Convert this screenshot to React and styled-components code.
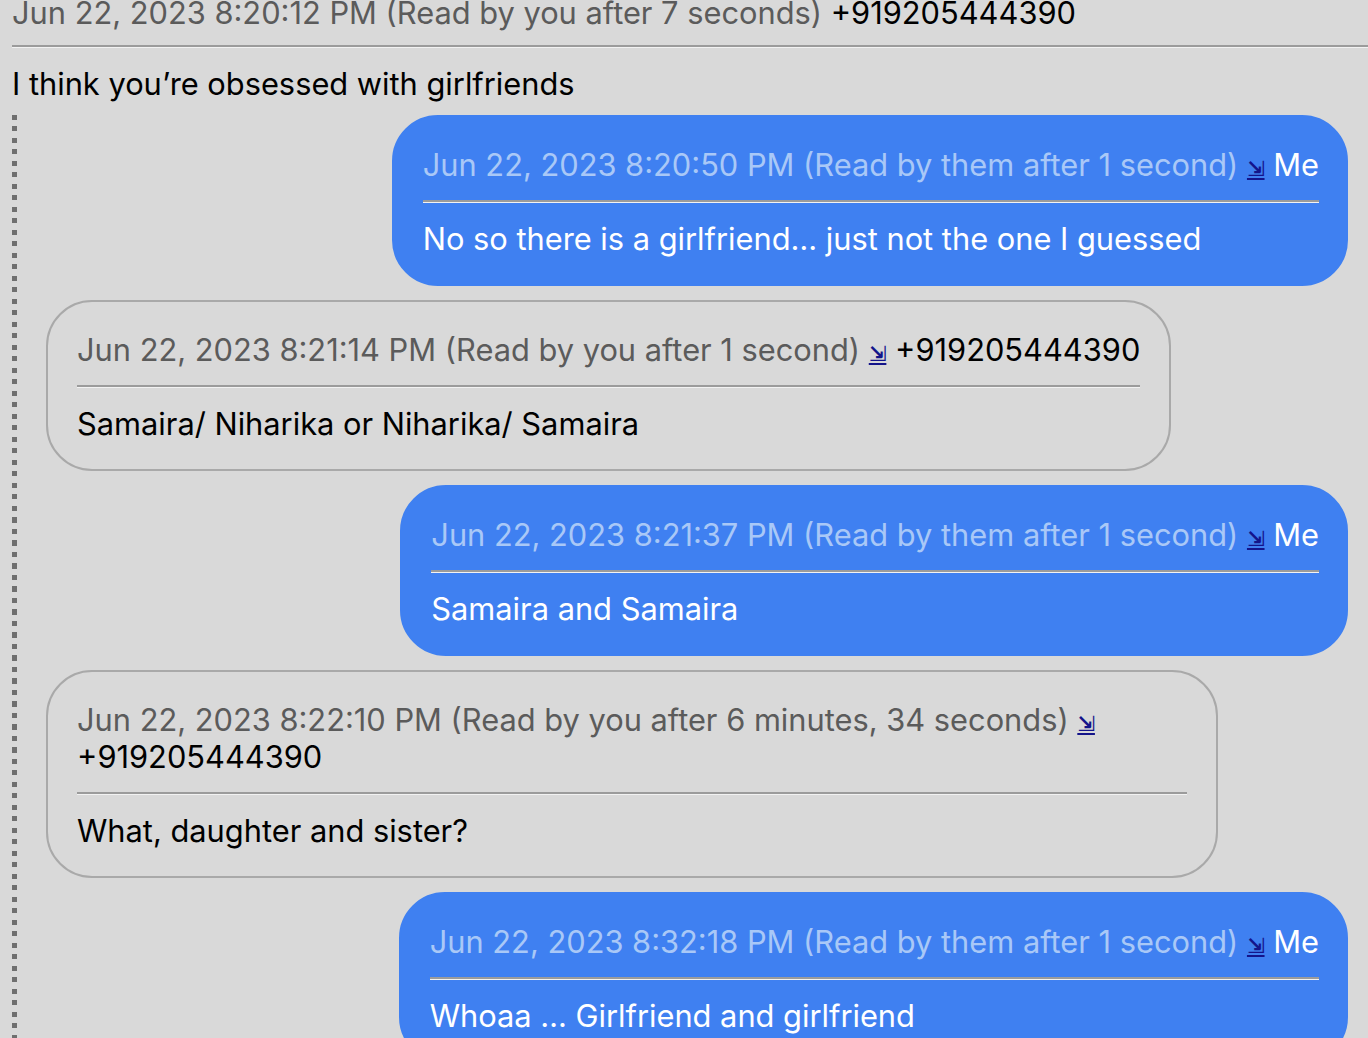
import styled, { createGlobalStyle } from "styled-components";

const GlobalStyle = createGlobalStyle`
html, body {
    margin: 0;
    padding: 0;
    background: #d9d9d9;
    overflow: hidden;
}
body {
    font-family: Inter, "Noto Sans", "Liberation Sans", sans-serif;
    font-size: 30.8px;
    line-height: 37px;
    color: #000;
}
`;

const thread = [
    { id: 1, sent: true, time: "Jun 22, 2023 8:20:50 PM", read: "Read by them after 1 second", text: "No so there is a girlfriend… just not the one I guessed" },
    { id: 2, sent: false, time: "Jun 22, 2023 8:21:14 PM", read: "Read by you after 1 second", text: "Samaira/ Niharika or Niharika/ Samaira" },
    { id: 3, sent: true, time: "Jun 22, 2023 8:21:37 PM", read: "Read by them after 1 second", text: "Samaira and Samaira" },
    { id: 4, sent: false, time: "Jun 22, 2023 8:22:10 PM", read: "Read by you after 6 minutes, 34 seconds", text: "What, daughter and sister?" },
    { id: 5, sent: true, time: "Jun 22, 2023 8:32:18 PM", read: "Read by them after 1 second", text: "Whoaa … Girlfriend and girlfriend" },
];

const Header = ({ msg }) => (
    <Head sent={msg.sent ? 'true' : 'false'}>
        <span>{msg.time} ({msg.read}) </span>
        <Jump href="#">⇲</Jump>{' '}
        <Sender sent={msg.sent ? 'true' : 'false'}>{msg.sent ? 'Me' : '+919205444390'}</Sender>
    </Head>
);

const App = () => {
    return (
        <Page>
            <GlobalStyle />
            <Parent>
                <ParentHead sent="false">
                    <span>Jun 22, 2023 8:20:12 PM (Read by you after 7 seconds) </span>
                    <Sender sent="false">+919205444390</Sender>
                </ParentHead>
                <Rule />
                <Body>I think you’re obsessed with girlfriends</Body>
            </Parent>
            <Replies>
                {thread.map(msg => (
                    <Row key={msg.id} sent={msg.sent ? 'true' : 'false'}>
                        <Bubble sent={msg.sent ? 'true' : 'false'}>
                            <Header msg={msg} />
                            <Rule />
                            <Body sent={msg.sent ? 'true' : 'false'}>{msg.text}</Body>
                        </Bubble>
                    </Row>
                ))}
            </Replies>
        </Page>
    );
};

export default App;

const Page = styled.div`
padding-left: 12px;
height: 1038px;
overflow: hidden;
`;

const Parent = styled.div`
margin-top: -6px;
margin-right: -40px;
`;

const Head = styled.div`
color: ${props => props.sent === 'true' ? '#a9c8f7' : '#5b5b5b'};
`;

const ParentHead = styled(Head)`
margin-bottom: -3px;
`;

const Sender = styled.span`
color: ${props => props.sent === 'true' ? '#ffffff' : '#000000'};
`;

const Jump = styled.a`
font-family: "DejaVu Sans", sans-serif;
font-size: 21px;
line-height: 1;
font-weight: bold;
color: #14148a;
text-decoration: underline;
`;

const Rule = styled.hr`
border: 0;
border-top: 2px solid #9b9b9b;
border-bottom: 1px solid #f2f2f2;
margin: 17px 0 17px;
`;

const Body = styled.div`
color: ${props => props.sent === 'true' ? '#ffffff' : '#000000'};
`;

const Replies = styled.div`
margin-top: 13px;
margin-right: 20px;
padding-left: 34px;
display: flex;
flex-direction: column;
gap: 14px;
background: repeating-linear-gradient(to bottom, #6f6f6f 0 5px, transparent 5px 11.5px) left top / 5px 100% no-repeat;
`;

const Row = styled.div`
display: flex;
justify-content: ${props => props.sent === 'true' ? 'flex-end' : 'flex-start'};
`;

const Bubble = styled.div`
box-sizing: border-box;
max-width: 90%;
padding: 29px ${props => props.sent === 'true' ? '27px' : '29px'} 27px 29px;
border-radius: 46px;
border: 2px solid ${props => props.sent === 'true' ? '#3f80f1' : '#a9a9a9'};
background: ${props => props.sent === 'true' ? '#3f80f1' : 'transparent'};
`;
